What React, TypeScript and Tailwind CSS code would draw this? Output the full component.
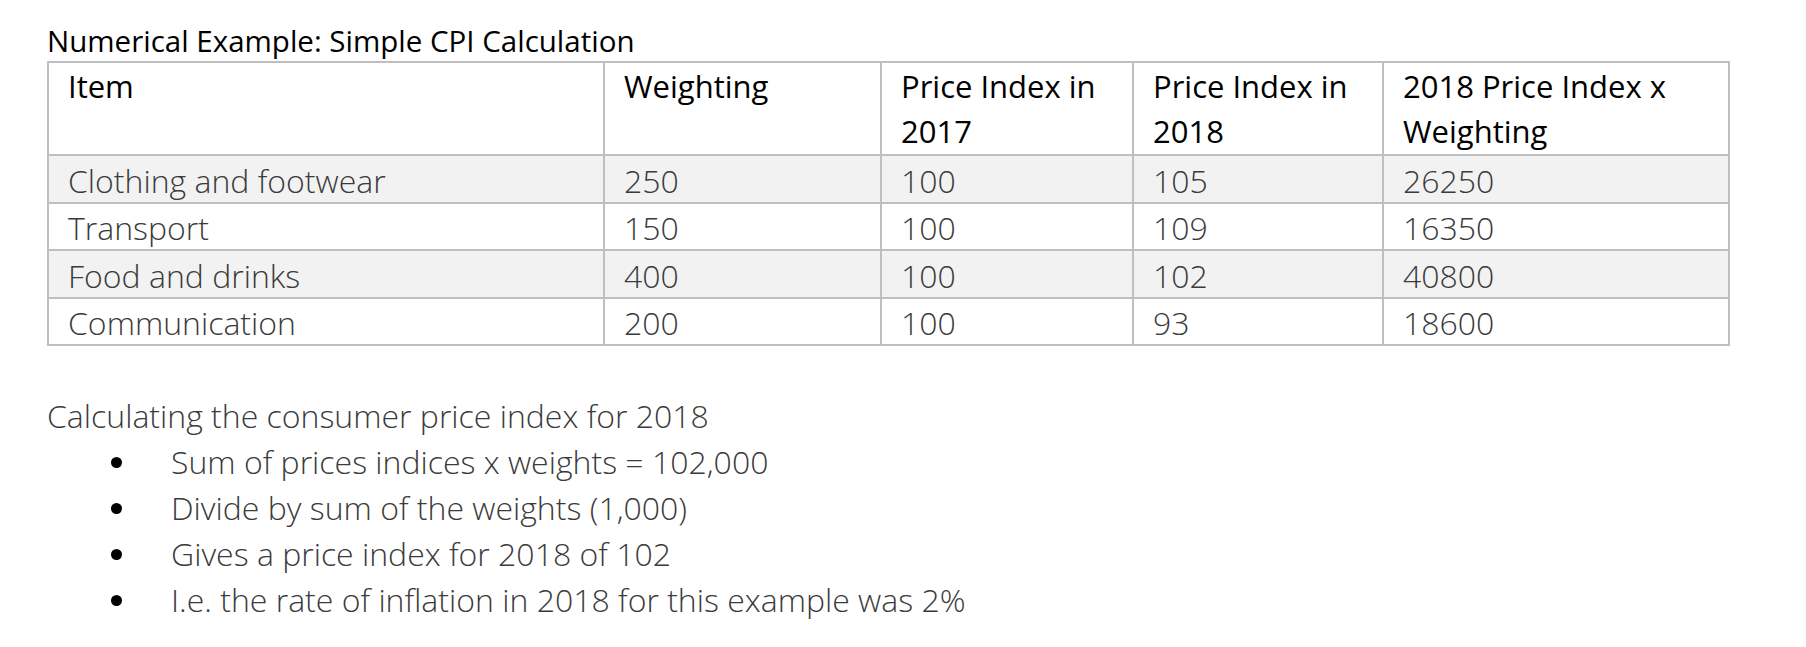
const rows = [
  ["Clothing and footwear", "250", "100", "105", "26250"],
  ["Transport", "150", "100", "109", "16350"],
  ["Food and drinks", "400", "100", "102", "40800"],
  ["Communication", "200", "100", "93", "18600"],
];

const bullets = [
  "Sum of prices indices x weights = 102,000",
  "Divide by sum of the weights (1,000)",
  "Gives a price index for 2018 of 102",
  "I.e. the rate of inflation in 2018 for this example was 2%",
];

export default function App() {
  return (
    <div className="w-[1806px] h-[647px] bg-white pl-[47px] pt-[21px] font-['Open_Sans',sans-serif] text-[32px] leading-[46px]">
      <h1 className="text-[29.5px] leading-[40px] font-normal text-black">
        Numerical Example: Simple CPI Calculation
      </h1>
      <table className="table-fixed border-collapse w-[1681px]">
        <colgroup>
          <col className="w-[556px]" />
          <col className="w-[277px]" />
          <col className="w-[252px]" />
          <col className="w-[250px]" />
          <col className="w-[346px]" />
        </colgroup>
        <thead>
          <tr>
            {["Item", "Weighting", "Price Index in 2017", "Price Index in 2018", "2018 Price Index x Weighting"].map((h) => (
              <th
                key={h}
                className="border-2 border-[#bfbfbf] align-top text-left font-normal text-black text-[31px] leading-[45px] pl-[19px] pr-[10px] pt-[1px]"
              >
                {h}
              </th>
            ))}
          </tr>
        </thead>
        <tbody>
          {rows.map((r, i) => (
            <tr key={r[0]} className={i % 2 === 0 ? "bg-[#f2f2f2]" : "bg-white"}>
              {r.map((c, j) => (
                <td
                  key={j}
                  className="border-2 border-[#bfbfbf] align-top font-light text-[#3b3b3b] leading-[43px] pl-[19px] pt-[2.5px]"
                >
                  {c}
                </td>
              ))}
            </tr>
          ))}
        </tbody>
      </table>
      <div className="mt-[47px] font-light text-[#3b3b3b]">
        <p>Calculating the consumer price index for 2018</p>
        <ul>
          {bullets.map((b) => (
            <li key={b} className="flex items-center">
              <span className="w-[11px] h-[11px] rounded-full bg-black ml-[64px] mr-[49px]" />
              <span>{b}</span>
            </li>
          ))}
        </ul>
      </div>
    </div>
  );
}
